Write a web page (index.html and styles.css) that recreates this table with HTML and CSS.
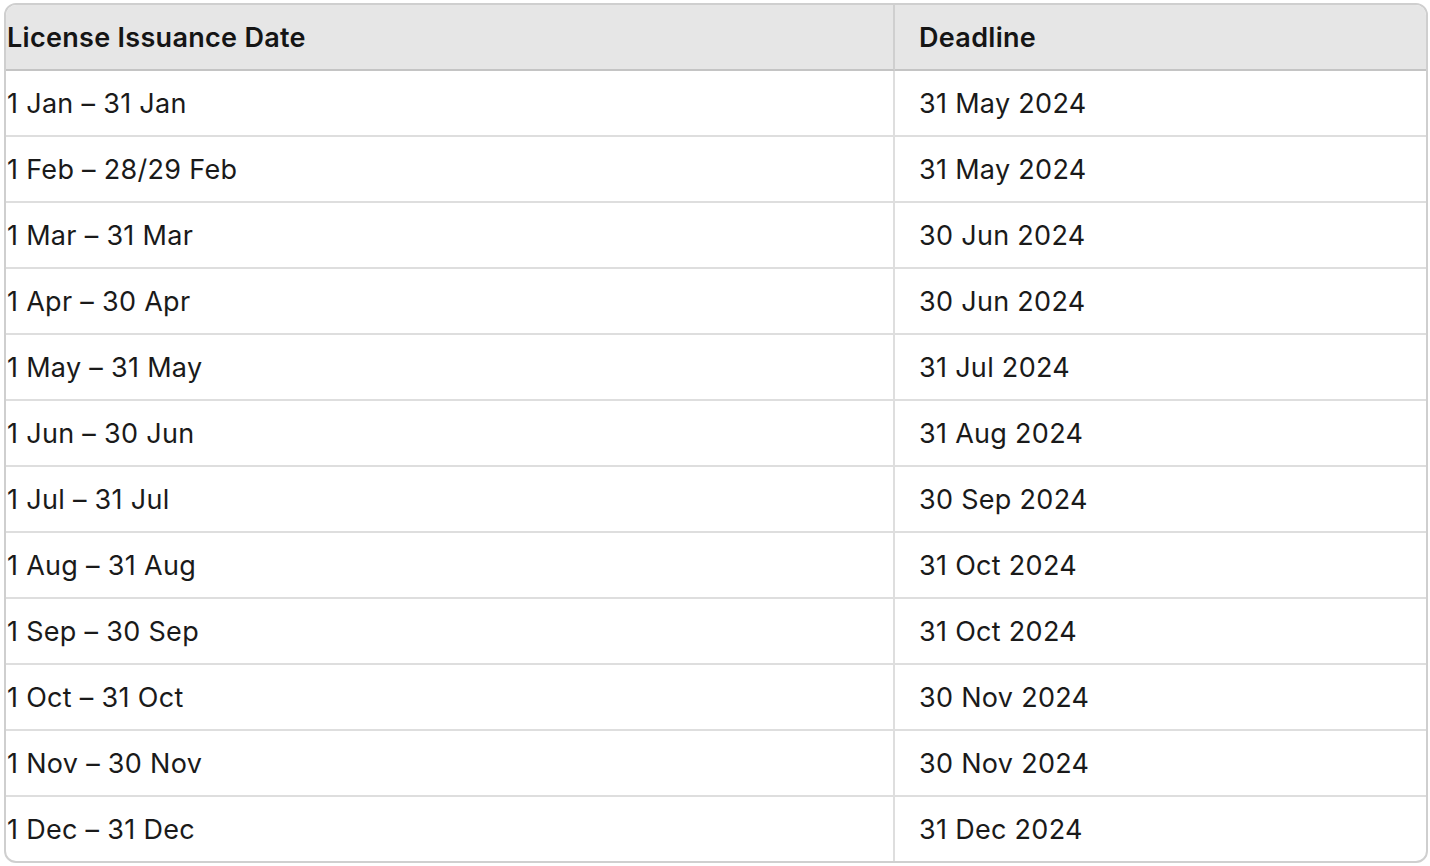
FILE: index.html
```html
<!DOCTYPE html>
<html>
<head>
<meta charset="utf-8">
<link rel="stylesheet" href="styles.css">
</head>
<body>
<div class="wrap">
<table class="tbl">
<thead>
<tr><th class="c1">License Issuance Date</th><th class="c2">Deadline</th></tr>
</thead>
<tbody>
<tr><td class="c1">1 Jan – 31 Jan</td><td class="c2">31 May 2024</td></tr>
<tr><td class="c1">1 Feb – 28/29 Feb</td><td class="c2">31 May 2024</td></tr>
<tr><td class="c1">1 Mar – 31 Mar</td><td class="c2">30 Jun 2024</td></tr>
<tr><td class="c1">1 Apr – 30 Apr</td><td class="c2">30 Jun 2024</td></tr>
<tr><td class="c1">1 May – 31 May</td><td class="c2">31 Jul 2024</td></tr>
<tr><td class="c1">1 Jun – 30 Jun</td><td class="c2">31 Aug 2024</td></tr>
<tr><td class="c1">1 Jul – 31 Jul</td><td class="c2">30 Sep 2024</td></tr>
<tr><td class="c1">1 Aug – 31 Aug</td><td class="c2">31 Oct 2024</td></tr>
<tr><td class="c1">1 Sep – 30 Sep</td><td class="c2">31 Oct 2024</td></tr>
<tr><td class="c1">1 Oct – 31 Oct</td><td class="c2">30 Nov 2024</td></tr>
<tr><td class="c1">1 Nov – 30 Nov</td><td class="c2">30 Nov 2024</td></tr>
<tr><td class="c1">1 Dec – 31 Dec</td><td class="c2">31 Dec 2024</td></tr>
</tbody>
</table>
</div>
</body>
</html>
```
FILE: styles.css
```css
html, body {
  margin: 0;
  padding: 0;
  background: #ffffff;
}
body {
  font-family: Inter, "Noto Sans", sans-serif;
  color: #1a1a1a;
}
.wrap {
  padding: 3px 2px 0 4px;
}
.tbl {
  width: 1424px;
  border-collapse: separate;
  border-spacing: 0;
  border: 2px solid #cfcfcf;
  border-radius: 12px;
  overflow: hidden;
  table-layout: fixed;
}
.tbl th, .tbl td {
  height: 64px;
  padding: 0;
  text-align: left;
  vertical-align: middle;
  font-size: 27px;
  letter-spacing: 0.3px;
  line-height: 1;
}
.tbl th {
  background: #e6e6e6;
  font-weight: 600;
  border-bottom: 2px solid #c4c4c4;
  color: #151515;
}
.tbl td {
  font-weight: 400;
  border-bottom: 2px solid #dedede;
}
.tbl tbody tr:last-child td {
  border-bottom: none;
}
.c1 {
  width: 886px;
  padding-left: 1px !important;
  border-right: 2px solid #dedede;
}
th.c1 {
  border-right-color: #cfcfcf;
}
.c2 {
  padding-left: 24px !important;
}
```
